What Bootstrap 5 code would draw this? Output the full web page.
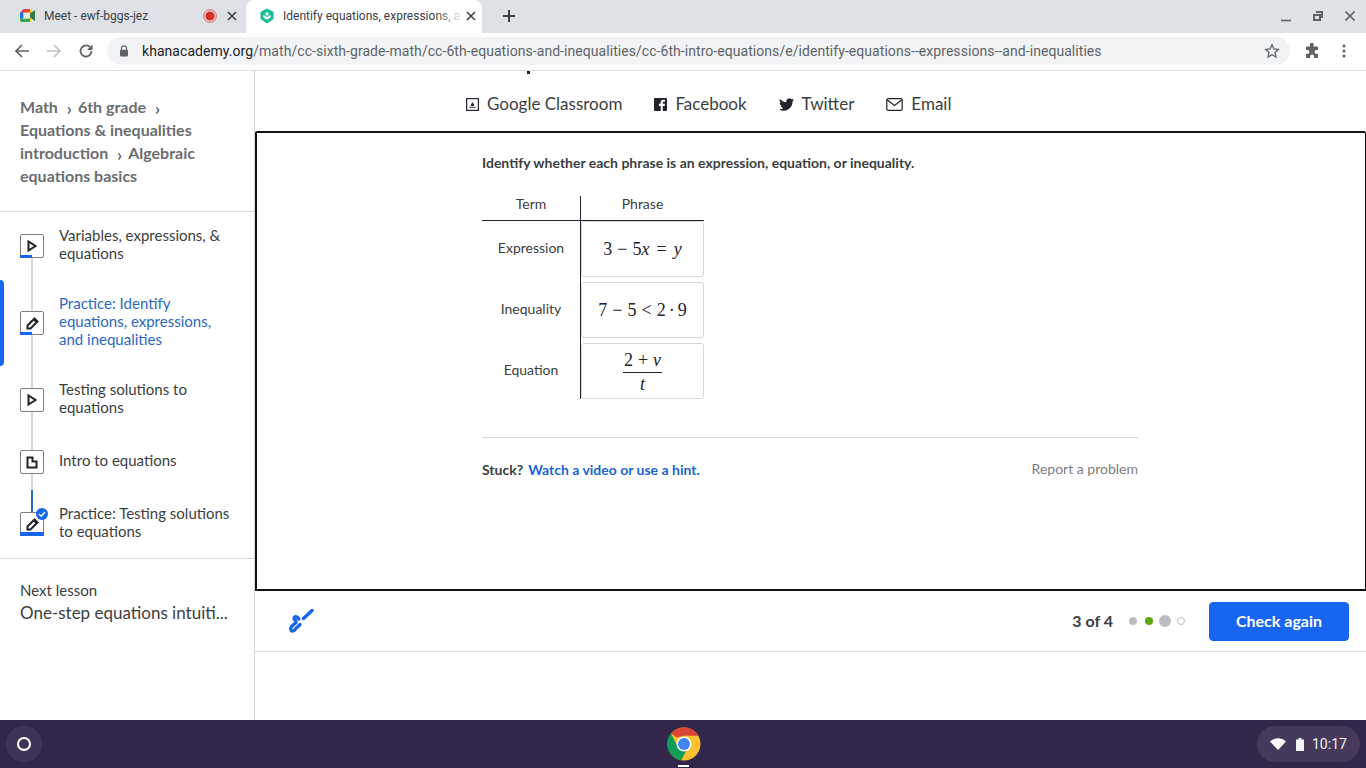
<!DOCTYPE html>
<html lang="en"><head><meta charset="utf-8"><title>Identify equations</title>
<link href="https://cdn.jsdelivr.net/npm/bootstrap@5.3.0/dist/css/bootstrap.min.css" rel="stylesheet">
<style>
html,body{height:100%;margin:0;overflow:hidden}
body{width:1366px;height:768px;font-family:Lato,sans-serif;color:#21242c;background:#fff;display:flex;flex-direction:column}
svg{display:block;flex:none}
.tabstrip{height:33px;background:#dee1e6;font:12px/16px Roboto,sans-serif;color:#3c4043;flex:none}
.tabx{height:33px;flex:none;padding-bottom:2px}
.tab1{width:246px;padding-left:20px;padding-right:9px}
.tab2{width:236px;background:#fff;border-radius:8px 8px 0 0;padding-left:13px;padding-right:6px;position:relative}
.tabico{margin-right:8px}
.closegap{margin-left:10px;position:relative}
.tabtext{white-space:nowrap;flex:1;min-width:0}
.tabfade{position:absolute;right:16px;top:0;width:30px;height:31px;background:linear-gradient(90deg,rgba(255,255,255,0),#fff 90%)}
.plusbtn{margin-left:20px;margin-bottom:2px}
.winctl{margin-left:auto;gap:18px;padding-right:9px;padding-bottom:2px}
.toolbar{height:38px;background:#fff;border-bottom:1px solid #dadce0;flex:none;padding:0 0 1px 14px}
.navico{margin-right:16px}
.omni{width:1183px;height:28px;background:#f1f3f4;border-radius:14px;margin-left:13px;padding:0 10px 0 12px;font:14px/28px Roboto,sans-serif;letter-spacing:.055px;color:#5f6368;white-space:nowrap}
.omni b{font-weight:400;color:#202124}
.lockicon{margin-right:13px}
.puzzle{margin-left:14px}
.kebab{margin-left:22px}
.shell{flex:1;min-height:0}
.sidepane{width:255px;border-right:1px solid #d6d8da;flex:none;position:relative}
.crumbs{padding:24px 20px 0;font-weight:700;font-size:16px;line-height:23px;color:#6b6d72;border-bottom:1px solid #d6d8da;height:141px}
.crumbs i{font-style:normal;font-weight:400;font-size:18px;line-height:0;margin:0 6px 0 5px;color:#3b3e40;position:relative;top:2px}
.lessons{position:relative;border-bottom:1px solid #d6d8da;font-size:15px;line-height:18px;color:#3b3e40;padding-bottom:2px}
.lessonrow{position:relative;padding-left:20px;padding-right:15px;gap:15px}
.lessonlabel{padding-bottom:2px}
.rowtall{height:66px}
.rowactive{height:88px}
.rowshort{height:58px}
.activeline{position:absolute;left:0;top:2px;bottom:0;width:4px;background:#1865f2;border-radius:0 4px 4px 0}
.lessonico{position:relative;z-index:1;margin-top:2px;width:24px;height:24px;flex:none;background:#fff;border:1px solid #7c7e82;border-radius:2px;display:flex;align-items:center;justify-content:center}
.lessonbar{position:absolute;left:-1px;bottom:-1px;height:3px;width:12px;background:#1865f2}
.lessonbar.full{width:24px;height:4px}
.checkmark{position:absolute;right:-5px;top:-5px}
.vline{position:absolute;left:31px;width:2px;background:#d6d8da}
.vgrey{top:46px;height:232px}
.vblue{top:278px;height:24px;background:#2a68c4}
.activecolor{color:#2a68c4}
.nextbox{padding:20px 20px 0;font-size:15px;line-height:22px;color:#3b3e40}
.nexttitle{font-size:17px;white-space:nowrap;margin-top:1px}
.mainpane{flex:1;min-width:0;display:flex;flex-direction:column}
.sharebar{height:60px;flex:none;position:relative;font-size:17px;line-height:24px;color:#3b3e40;padding:21px 0 0 211px;gap:32px}
.shareitem{gap:8px;height:24px}
.cutoff{position:absolute;left:272px;top:0;width:3px;height:3px;background:#21242c}
.exframe{height:460px;flex:none;border:2px solid #111;border-radius:2px 2px 0 0;border-right-width:1px;padding:20px 0 0 225px}
.prompt{font-size:14px;font-weight:700;line-height:20px;color:#3b3e40;height:43px}
.termtbl{display:grid;grid-template-columns:99px 123px;width:222px;font-size:14px;color:#3b3e40}
.th1,.th2{height:25px;line-height:15px;text-align:center;border-bottom:1px solid #21242c}
.th1{border-right:1px solid #21242c}
.tcell{height:61px;padding-bottom:9px;display:flex;align-items:center;justify-content:center;border-right:1px solid #21242c}
.tcell.last{height:56px;padding-bottom:4px}
.ccell{height:56px;margin:0 0 5px;border:1px solid #d6d8da;border-radius:3px;display:flex;align-items:center;justify-content:center;font:18px/20px "Liberation Serif",serif;color:#21242c;white-space:nowrap}
.ccell.last{margin-bottom:0}
.ccell em{font-style:italic}
.mop{margin:0 5px}
.mwide{margin:0 7px}
.msm{margin:0 3px}
.frac{display:flex;flex-direction:column;align-items:center;margin-top:2px}
.fnum{border-bottom:1px solid #21242c;padding:0 1px 1px;line-height:22px}
.fden{line-height:22px}
.stuck{width:656px;margin-top:38px;border-top:1px solid #d6d8da;padding-top:22px;font-size:14px;line-height:20px;color:#3b3e40}
.stuck strong{font-weight:700}
.hintlink{color:#1a65d6;font-weight:700;margin-left:5px;text-decoration:none}
.reportlink{color:#7c7e82;text-decoration:none;margin-top:-1px}
.footbar{height:61px;flex:none;border-bottom:1px solid #d6d8da;padding:0 17px 0 33px}
.countlbl{font-size:16px;font-weight:700;color:#3b3e40;margin-right:16px}
.dots{gap:8px;margin-right:24px}
.dotx{border-radius:50%;width:8px;height:8px;background:#babec2}
.dotg{background:#5ca80f}
.dotb{width:12px;height:12px;margin:0 -2px}
.dote{background:#fff;border:1.5px solid #babec2}
.checkbtn{width:140px;height:39px;background:#1865f2;border-color:#1865f2;border-radius:4px;font-family:Lato,sans-serif;font-size:16px;font-weight:700;color:#fff;padding:0 0 2px;line-height:35px}
.osbar{height:48px;flex:none;background:#33264b;position:relative}
.launcher{position:absolute;left:6px;top:6px;width:36px;height:36px;border-radius:50%;background:#3f3357;display:flex;align-items:center;justify-content:center}
.launcher span{width:14px;height:14px;border:2px solid #fff;border-radius:50%}
.chromeapp{position:absolute;left:667px;top:7px}
.appdash{position:absolute;left:678px;top:45px;width:11px;height:2px;background:#fff}
.tray{position:absolute;left:1257px;top:6px;width:103px;height:36px;border-radius:18px;background:#45395c;color:#f1f3f4;font:14px/36px Roboto,sans-serif;padding-left:13px;gap:10px}
.traytime{margin-left:-2px}
</style></head><body>
<div class="tabstrip d-flex">
 <div class="tabx tab1 d-flex align-items-center">
  <svg class="tabico" width="16" height="13" viewBox="0 0 16 13"><path d="M0 3.500L3.500 0H10v4H3.500z" fill="#ea4335"/><path d="M0 3.500h3.500v6H0z" fill="#1a73e8"/><path d="M0 9.500h3.500L10 9v4H2a2 2 0 0 1-2-2z" fill="#34a853"/><path d="M3.500 3.500H10v6H3.500z" fill="#e8e8e0"/><path d="M10 0v13l1-1V1z" fill="#fbbc04"/><path d="M10 4.500l5-3.500v11l-5-3.500z" fill="#2f7d44"/></svg>
  <div class="tabtext">Meet - ewf-bggs-jez</div>
  <svg width="14" height="14" viewBox="0 0 14 14"><circle cx="7" cy="7" r="6.300" fill="none" stroke="#e8594f" stroke-width="1"/><circle cx="7" cy="7" r="4.600" fill="#d93025"/></svg>
  <svg class="closegap" width="10" height="10" viewBox="0 0 10 10"><path d="M1 1l8 8M9 1l-8 8" stroke="#3c4043" stroke-width="1.600"/></svg>
 </div>
 <div class="tabx tab2 d-flex align-items-center">
  <svg class="tabico" width="16" height="16" viewBox="0 0 16 16"><path d="M8 .5l6.500 3.400v7.200L8 15.500 1.500 11.100V3.900z" fill="#14bf96"/><circle cx="8" cy="6" r="1.700" fill="#fff"/><path d="M4 7.500c.5 2.500 2 3.700 4 3.900 2-.2 3.500-1.400 4-3.900-1.800 0-3.300.5-4 2-.7-1.500-2.200-2-4-2z" fill="#fff"/></svg>
  <div class="tabtext">Identify equations, expressions, a</div>
  <span class="tabfade"></span>
  <svg class="closegap" width="10" height="10" viewBox="0 0 10 10"><path d="M1 1l8 8M9 1l-8 8" stroke="#3c4043" stroke-width="1.600"/></svg>
 </div>
 <svg class="plusbtn align-self-center" width="14" height="14" viewBox="0 0 14 14"><path d="M7 1v12M1 7h12" stroke="#3c4043" stroke-width="2"/></svg>
 <div class="winctl d-flex align-items-center">
  <svg width="14" height="14" viewBox="0 0 14 14"><path d="M2 11.500h10" stroke="#5f6368" stroke-width="1.600"/></svg>
  <svg width="14" height="14" viewBox="0 0 14 14"><path d="M5 2h7v7h-2V4H5z M2 5h8v7H2z M4 7v3h4V7z" fill="#5f6368" fill-rule="evenodd"/></svg>
  <svg width="14" height="14" viewBox="0 0 14 14"><path d="M2.500 2.500l9 9M11.500 2.500l-9 9" stroke="#5f6368" stroke-width="1.700"/></svg>
 </div>
</div>
<div class="toolbar d-flex align-items-center">
 <svg class="navico" width="16" height="16" viewBox="0 0 16 16"><path d="M15 8H2M8 2L2 8l6 6" fill="none" stroke="#5f6368" stroke-width="1.700"/></svg>
 <svg class="navico" width="16" height="16" viewBox="0 0 16 16"><path d="M1 8h13M8 2l6 6-6 6" fill="none" stroke="#bdc1c6" stroke-width="1.700"/></svg>
 <svg width="16" height="16" viewBox="0 0 16 16"><path d="M13.500 8A5.500 5.500 0 1 1 12 4.200" fill="none" stroke="#5f6368" stroke-width="1.800"/><path d="M14.500 1.500v5.500H9z" fill="#5f6368"/></svg>
 <div class="omni d-flex align-items-center">
  <svg class="lockicon" width="10" height="12" viewBox="0 0 10 12"><path d="M2.500 5V3.300a2.500 2.500 0 0 1 5 0V5" fill="none" stroke="#5f6368" stroke-width="1.200"/><rect x="1" y="4.800" width="8" height="6.700" rx="1" fill="#5f6368"/></svg>
  <span><b>khanacademy.org</b>/math/cc-sixth-grade-math/cc-6th-equations-and-inequalities/cc-6th-intro-equations/e/identify-equations--expressions--and-inequalities</span>
  <svg class="ms-auto" width="16" height="16" viewBox="0 0 16 16"><path d="M8 1.800l1.900 4.200 4.500.5-3.400 3 1 4.500L8 11.700 4 14l1-4.500-3.400-3 4.500-.5z" fill="none" stroke="#5f6368" stroke-width="1.300"/></svg>
 </div>
 <svg class="puzzle" width="16" height="16" viewBox="0 0 16 16"><path d="M6 1.500a1.800 1.800 0 0 1 3.600 0V3.500H13a1 1 0 0 1 1 1V7h-1.500a1.900 1.900 0 0 0 0 3.800H14V14a1 1 0 0 1-1 1h-3v-1.500a1.900 1.900 0 0 0-3.800 0V15H3a1 1 0 0 1-1-1v-3.200H3.500a1.900 1.900 0 0 0 0-3.800H2V4.500a1 1 0 0 1 1-1h3z" fill="#5f6368"/></svg>
 <svg class="kebab" width="4" height="14" viewBox="0 0 4 14"><circle cx="2" cy="2" r="1.500" fill="#5f6368"/><circle cx="2" cy="7" r="1.500" fill="#5f6368"/><circle cx="2" cy="12" r="1.500" fill="#5f6368"/></svg>
</div>
<div class="shell d-flex">
 <div class="sidepane">
  <div class="crumbs">Math <i>›</i>6th grade <i>›</i><br>Equations &amp; inequalities<br>introduction <i>›</i>Algebraic<br>equations basics</div>
  <div class="lessons">
   <div class="vline vgrey"></div>
   <div class="vline vblue"></div>
   <div class="lessonrow rowtall d-flex align-items-center">
    <div class="lessonico"><svg width="10" height="12" viewBox="0 0 10 12"><path d="M1.500 1.500v9L8.500 6z" fill="none" stroke="#21242c" stroke-width="2"/></svg><span class="lessonbar"></span></div>
    <div class="lessonlabel">Variables, expressions, &amp; equations</div>
   </div>
   <div class="lessonrow rowactive d-flex align-items-center activecolor">
    <div class="activeline"></div>
    <div class="lessonico"><svg width="13" height="13" viewBox="0 0 13 13"><path d="M8.500 1.500l3 3-7 7H1.500V8.500z" fill="none" stroke="#21242c" stroke-width="2"/><path d="M7 3l3 3 1.500-1.500-3-3z" fill="#21242c"/></svg><span class="lessonbar"></span></div>
    <div class="lessonlabel">Practice: Identify equations, expressions, and inequalities</div>
   </div>
   <div class="lessonrow rowtall d-flex align-items-center">
    <div class="lessonico"><svg width="10" height="12" viewBox="0 0 10 12"><path d="M1.500 1.500v9L8.500 6z" fill="none" stroke="#21242c" stroke-width="2"/></svg></div>
    <div class="lessonlabel">Testing solutions to equations</div>
   </div>
   <div class="lessonrow rowshort d-flex align-items-center">
    <div class="lessonico"><svg width="12" height="13" viewBox="0 0 12 13"><path d="M1.500 1.500h5v4h4v6h-9z" fill="none" stroke="#21242c" stroke-width="2"/></svg></div>
    <div class="lessonlabel">Intro to equations</div>
   </div>
   <div class="lessonrow rowtall d-flex align-items-center">
    <div class="lessonico"><svg width="13" height="13" viewBox="0 0 13 13"><path d="M8.500 1.500l3 3-7 7H1.500V8.500z" fill="none" stroke="#21242c" stroke-width="2"/><path d="M7 3l3 3 1.500-1.500-3-3z" fill="#21242c"/></svg><span class="lessonbar full"></span>
     <svg class="checkmark" width="12" height="12" viewBox="0 0 12 12"><circle cx="6" cy="6" r="6" fill="#1865f2"/><path d="M3 6l2.200 2.200L9 4" fill="none" stroke="#fff" stroke-width="1.400"/></svg></div>
    <div class="lessonlabel">Practice: Testing solutions to equations</div>
   </div>
  </div>
  <div class="nextbox">Next lesson<div class="nexttitle">One-step equations intuiti...</div></div>
 </div>
 <div class="mainpane">
  <div class="sharebar d-flex">
   <span class="cutoff"></span>
   <div class="shareitem d-flex align-items-center">
    <svg width="13" height="13" viewBox="0 0 14 14"><rect x=".7" y=".7" width="12.600" height="12.600" fill="none" stroke="#21242c" stroke-width="1.300"/><path d="M3.500 10h7M5.500 8l1.500-3 1.500 3z" stroke="#21242c" fill="#21242c"/></svg>Google Classroom</div>
   <div class="shareitem d-flex align-items-center">
    <svg width="13" height="13" viewBox="0 0 14 14"><path d="M1 0h12a1 1 0 0 1 1 1v12a1 1 0 0 1-1 1H9.500V8.500h2l.3-2.200H9.500V5c0-.7.300-1 1-1h1.300V2H10C8.200 2 7.200 3.100 7.200 4.800v1.500H5.300v2.200h1.900V14H1a1 1 0 0 1-1-1V1a1 1 0 0 1 1-1z" fill="#21242c"/></svg>Facebook</div>
   <div class="shareitem d-flex align-items-center">
    <svg width="15" height="13" viewBox="0 0 16 13"><path d="M16 1.500c-.6.300-1.200.4-1.900.5.700-.4 1.200-1 1.400-1.800-.6.400-1.300.6-2.100.8a3.300 3.300 0 0 0-5.600 3C5.100 3.900 2.700 2.600 1.100.6.200 2.100.7 4 2.100 5c-.5 0-1-.2-1.500-.4 0 1.600 1.100 2.900 2.600 3.200-.5.100-1 .2-1.500.1.400 1.300 1.600 2.200 3 2.300A6.600 6.600 0 0 1 0 11.500 9.300 9.300 0 0 0 14.400 3.300c.6-.5 1.200-1.100 1.600-1.800z" fill="#21242c"/></svg>Twitter</div>
   <div class="shareitem d-flex align-items-center">
    <svg width="17" height="13" viewBox="0 0 18 14"><rect x=".7" y=".7" width="16.600" height="12.600" rx="1.500" fill="none" stroke="#21242c" stroke-width="1.300"/><path d="M1 2l8 6 8-6" fill="none" stroke="#21242c" stroke-width="1.300"/></svg>Email</div>
  </div>
  <div class="exframe">
   <div class="prompt">Identify whether each phrase is an expression, equation, or inequality.</div>
   <div class="termtbl">
    <div class="th1">Term</div><div class="th2">Phrase</div>
    <div class="tcell">Expression</div><div class="ccell"><span>3<span class="mop">−</span>5<em>x</em><span class="mwide">=</span><em>y</em></span></div>
    <div class="tcell">Inequality</div><div class="ccell"><span>7<span class="mop">−</span>5<span class="mop">&lt;</span>2<span class="msm">·</span>9</span></div>
    <div class="tcell last">Equation</div><div class="ccell last"><div class="frac"><span class="fnum">2<span class="mop">+</span><em>v</em></span><span class="fden"><em>t</em></span></div></div>
   </div>
   <div class="stuck d-flex justify-content-between">
    <div><strong>Stuck?</strong><a class="hintlink" href="#">Watch a video or use a hint.</a></div>
    <a class="reportlink" href="#">Report a problem</a>
   </div>
  </div>
  <div class="footbar d-flex align-items-center">
   <svg width="26" height="26" viewBox="0 0 26 26"><path d="M15.500 10.500L24 2.500" stroke="#1865f2" stroke-width="3.400" stroke-linecap="round"/><path d="M11 11C9 8 6 8 6 10.500 6 12.500 9 12 8 14.500L3.500 18.500C2 20.500 3 23.500 5 23 7 22.500 8 19.500 10 18.500L12 16.500" fill="none" stroke="#1865f2" stroke-width="3.300" stroke-linecap="round" stroke-linejoin="round"/></svg>
   <div class="ms-auto countlbl">3 of 4</div>
   <div class="dots d-flex align-items-center"><span class="dotx"></span><span class="dotx dotg"></span><span class="dotx dotb"></span><span class="dotx dote"></span></div>
   <button class="btn btn-primary checkbtn">Check again</button>
  </div>
 </div>
</div>
<div class="osbar">
 <div class="launcher"><span></span></div>
 <svg class="chromeapp" width="34" height="34" viewBox="0 0 34 34"><circle cx="17" cy="17" r="16.500" fill="#fbc02d"/><path d="M17 .5A16.500 16.500 0 0 1 31.300 8.800H17L9.800 10.500 4 6.500A16.500 16.500 0 0 1 17 .5z" fill="#db4437"/><path d="M4 6.500A16.500 16.500 0 0 0 14 33.200L21 21 17 23.500 11 20z" fill="#0f9d58"/><circle cx="17" cy="17" r="7.500" fill="#fff"/><circle cx="17" cy="17" r="6" fill="#4285f4"/></svg>
 <span class="appdash"></span>
 <div class="tray d-flex align-items-center">
  <svg width="16" height="12" viewBox="0 0 16 12"><path d="M8 12L0 3.500C4.500-1 11.500-1 16 3.500z" fill="#fff"/></svg>
  <svg width="8" height="13" viewBox="0 0 8 13"><path d="M2.500 0h3v1.500H8V13H0V1.500h2.500z" fill="#f1f3f4"/></svg>
  <span class="traytime">10:17</span>
 </div>
</div>
</body></html>
